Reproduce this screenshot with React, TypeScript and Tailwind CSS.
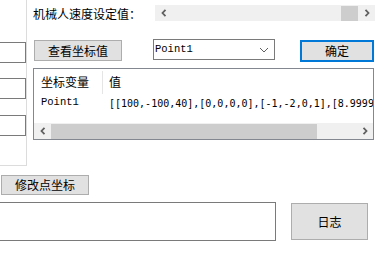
import React from 'react';

const CJK = "font-['Noto_Sans_CJK_SC','Noto_Sans',sans-serif]";
const MONO = "font-['Liberation_Mono','Noto_Sans_CJK_SC',monospace]";

function Arrow({ dir }: { dir: 'left' | 'right' }) {
  return (
    <svg width="6" height="8" viewBox="0 0 6 8" className="block">
      {dir === 'left' ? (
        <polyline points="4.5,0.8 1.5,4 4.5,7.2" fill="none" stroke="#606060" strokeWidth="1.8" />
      ) : (
        <polyline points="1.5,0.8 4.5,4 1.5,7.2" fill="none" stroke="#606060" strokeWidth="1.8" />
      )}
    </svg>
  );
}

function WinButton({ label, className }: { label: string; className: string }) {
  return (
    <div
      className={`flex items-center justify-center bg-[#e1e1e1] border border-[#adadad] text-[12px] text-black ${className}`}
    >
      {label}
    </div>
  );
}

export default function App() {
  return (
    <div className={`w-[377px] h-[270px] bg-white overflow-hidden ${CJK} text-black`}>
      {/* 上半部分 */}
      <div className="flex h-[166px]">
        {/* 左侧面板（被裁切） */}
        <div className="w-[27px] h-[166px] shrink-0 border-r border-b border-[#dcdcdc] flex flex-col">
          <div className="mt-[42px] w-[26px] h-[21px] border-y border-r border-[#7a7a7a]" />
          <div className="mt-[15px] w-[26px] h-[21px] border-y border-r border-[#7a7a7a]" />
          <div className="mt-[16px] w-[26px] h-[21px] border-y border-r border-[#7a7a7a]" />
        </div>

        <div className="ml-[6px] flex flex-col">
          {/* 速度设定 */}
          <div className="flex items-start pt-[5px]">
            <span className="w-[122px] text-[12px] leading-[20px] -mt-[1px]">机械人速度设定值：</span>
            <div className="w-[220px] h-[16px] bg-[#f0f0f0] flex items-center">
              <div className="w-[16px] flex justify-center ml-[1px]">
                <Arrow dir="left" />
              </div>
              <div className="ml-[169px] w-[17px] h-[15px] bg-[#cdcdcd]" />
              <div className="ml-auto w-[17px] flex justify-center">
                <Arrow dir="right" />
              </div>
            </div>
          </div>

          {/* 按钮行 */}
          <div className="flex items-start mt-[15px]">
            <WinButton label="查看坐标值" className="mt-[1px] ml-[1px] w-[88px] h-[21px]" />
            <div className="ml-[31px] w-[122px] h-[21px] border border-[#7a7a7a] bg-white flex items-center pl-[1px] pr-[5px]">
              <span className={`${MONO} text-[10.5px] leading-none`}>Point1</span>
              <svg width="10" height="6" viewBox="0 0 10 6" className="ml-auto">
                <polyline points="1,1 5,5 9,1" fill="none" stroke="#606060" strokeWidth="1" />
              </svg>
            </div>
            <div className="ml-[25px] mt-[1px] w-[74px] h-[22px] border-2 border-[#0078d7] bg-[#e1e1e1] flex items-center justify-center text-[12px]">
              确定
            </div>
          </div>

          {/* 列表 */}
          <div className="mt-[6px] w-[341px] h-[72px] border border-[#828790] bg-white flex flex-col overflow-hidden">
            <div className="flex h-[26px] items-center text-[12px]">
              <div className="w-[69px] shrink-0 pl-[7px] h-[23px] flex items-center border-r border-[#e5e5e5]">坐标变量</div>
              <div className="pl-[6px]">值</div>
            </div>
            <div className="flex h-[16px] items-center whitespace-nowrap overflow-hidden">
              <div className={`w-[69px] shrink-0 pl-[7px] ${MONO} text-[10.5px]`}>Point1</div>
              <div className="pl-[6px] shrink-0 font-['DejaVu_Sans_Mono',monospace] text-[10px]">
                [[100,-100,40],[0,0,0,0],[-1,-2,0,1],[8.9999
              </div>
            </div>
            <div className="mt-auto h-[16px] bg-[#f0f0f0] flex items-center">
              <div className="w-[17px] flex justify-center">
                <Arrow dir="left" />
              </div>
              <div className="w-[266px] h-[15px] bg-[#cdcdcd]" />
              <div className="ml-auto w-[17px] flex justify-center">
                <Arrow dir="right" />
              </div>
            </div>
          </div>
        </div>
      </div>

      {/* 下半部分 */}
      <WinButton label="修改点坐标" className="mt-[9px] ml-[1px] w-[88px] h-[20px]" />
      <div className="flex items-start mt-[7px]">
        <div className="w-[276px] h-[39px] border-y border-r border-[#7a7a7a] bg-white" />
        <WinButton label="日志" className="ml-[15px] mt-[1px] w-[77px] h-[37px]" />
      </div>
    </div>
  );
}
